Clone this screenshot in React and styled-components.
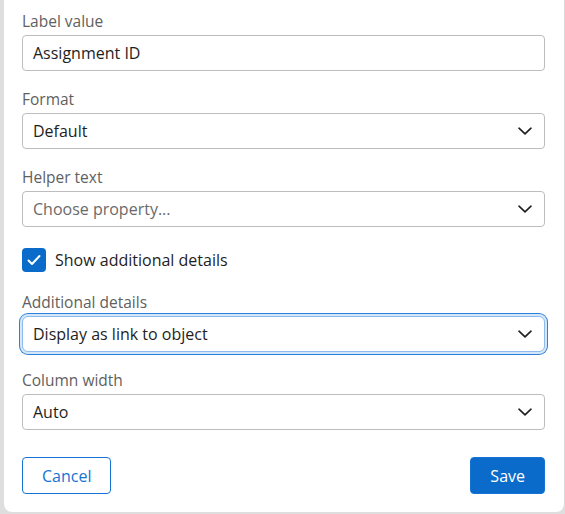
import React, { useState } from 'react';
import styled, { createGlobalStyle } from 'styled-components';

const GlobalStyle = createGlobalStyle`
  html, body {
    margin: 0;
    padding: 0;
    background: #dedede;
    font-family: "Open Sans", "Noto Sans", sans-serif;
  }
  * { box-sizing: border-box; }
`;

const Page = styled.div`
  width: 565px;
  height: 514px;
  padding: 0 0 2px 4px;
  background: #dedede;
`;

const Panel = styled.div`
  width: 561px;
  height: 512px;
  background: #ffffff;
  border-right: 1px solid #d8d8d8;
  border-radius: 0 0 8px 8px;
  padding: 11px 19px 18px 18px;
  display: flex;
  flex-direction: column;
`;

const Field = styled.div`
  display: flex;
  flex-direction: column;
  gap: 4px;
  margin-bottom: 18px;
`;

const Label = styled.label`
  font-size: 15.5px;
  line-height: 20px;
  color: #5f5f5f;
`;

const Box = styled.div`
  height: 36px;
  border: 1px solid ${p => (p.focused ? '#8dbbed' : '#bdbdbd')};
  border-radius: ${p => (p.focused ? '6px' : '4px')};
  display: flex;
  align-items: center;
  justify-content: space-between;
  padding: 0 12px 0 10px;
  font-size: 16px;
  color: ${p => (p.placeholder ? '#6a6a6a' : '#1e1e1e')};
  box-shadow: ${p => (p.focused ? '0 0 0 2px #d4e6f9, 0 0 0 3px #2f80d8' : 'none')};
  background: #fff;
`;

const CheckRow = styled.div`
  height: 31px;
  display: flex;
  align-items: center;
  gap: 9px;
  margin-bottom: 18px;
  margin-top: 1px;
  font-size: 16px;
  color: #1e1e1e;
  cursor: pointer;
`;

const CheckBox = styled.span`
  width: 24px;
  height: 24px;
  border-radius: 4px;
  background: #0b6bcb;
  display: flex;
  align-items: center;
  justify-content: center;
`;

const Footer = styled.div`
  margin-top: 9px;
  display: flex;
  justify-content: space-between;
`;

const Button = styled.button`
  height: 37px;
  padding: 0 19px;
  border-radius: 4px;
  border: 1px solid #1673d4;
  background: ${p => (p.primary ? '#0b6bcb' : '#ffffff')};
  color: ${p => (p.primary ? '#ffffff' : '#1673d4')};
  font-family: inherit;
  font-size: 16px;
  cursor: pointer;
`;

const Chevron = () => (
  <svg width="14" height="8" viewBox="0 0 14 8" fill="none">
    <path d="M1 1.2l6 5.6 6-5.6" stroke="#1e1e1e" strokeWidth="1.6" strokeLinecap="round" strokeLinejoin="round" />
  </svg>
);

const Select = ({ value, placeholder, focused }) => (
  <Box focused={focused} placeholder={placeholder ? 1 : 0}>
    <span>{value || placeholder}</span>
    <Chevron />
  </Box>
);

export default function App() {
  const [checked, setChecked] = useState(true);
  return (
    <Page>
      <GlobalStyle />
      <Panel>
        <Field>
          <Label>Label value</Label>
          <Box>Assignment ID</Box>
        </Field>
        <Field>
          <Label>Format</Label>
          <Select value="Default" />
        </Field>
        <Field>
          <Label>Helper text</Label>
          <Select placeholder="Choose property..." />
        </Field>
        <CheckRow onClick={() => setChecked(!checked)}>
          <CheckBox>
            {checked && (
              <svg width="16" height="16" viewBox="0 0 16 16" fill="none">
                <path d="M2.5 8.5l3.5 3.5 7.5-8" stroke="#fff" strokeWidth="2" strokeLinecap="round" strokeLinejoin="round" />
              </svg>
            )}
          </CheckBox>
          Show additional details
        </CheckRow>
        <Field>
          <Label>Additional details</Label>
          <Select value="Display as link to object" focused />
        </Field>
        <Field>
          <Label>Column width</Label>
          <Select value="Auto" />
        </Field>
        <Footer>
          <Button>Cancel</Button>
          <Button primary>Save</Button>
        </Footer>
      </Panel>
    </Page>
  );
}
